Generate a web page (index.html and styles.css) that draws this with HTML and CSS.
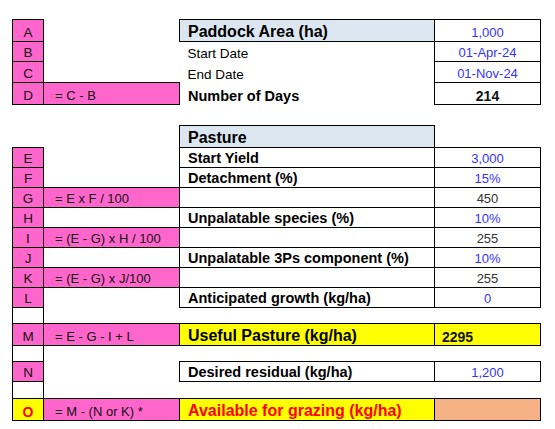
FILE: index.html
```html
<!DOCTYPE html>
<html>
<head>
<meta charset="utf-8">
<link rel="stylesheet" href="styles.css">
</head>
<body>
<table class="sheet">
  <colgroup>
    <col class="c-key">
    <col class="c-formula">
    <col class="c-label">
    <col class="c-value">
  </colgroup>
  <tr class="r22">
    <td class="key">A</td><td></td>
    <td class="label head">Paddock Area (ha)</td>
    <td class="val blue">1,000</td>
  </tr>
  <tr class="r20">
    <td class="key">B</td><td></td>
    <td class="label plain">Start Date</td>
    <td class="val blue">01-Apr-24</td>
  </tr>
  <tr class="r21">
    <td class="key">C</td><td></td>
    <td class="label plain">End Date</td>
    <td class="val blue">01-Nov-24</td>
  </tr>
  <tr class="r22">
    <td class="key">D</td><td class="formula">= C - B</td>
    <td class="label strong">Number of Days</td>
    <td class="val bold">214</td>
  </tr>
  <tr class="r21"><td></td><td></td><td></td><td></td></tr>
  <tr class="r22">
    <td></td><td></td>
    <td class="label head">Pasture</td>
    <td></td>
  </tr>
  <tr class="r20">
    <td class="key">E</td><td></td>
    <td class="label boxed">Start Yield</td>
    <td class="val blue">3,000</td>
  </tr>
  <tr class="r20">
    <td class="key">F</td><td></td>
    <td class="label boxed">Detachment (%)</td>
    <td class="val blue">15%</td>
  </tr>
  <tr class="r20">
    <td class="key">G</td><td class="formula">= E x F / 100</td>
    <td class="label boxed"></td>
    <td class="val dark">450</td>
  </tr>
  <tr class="r20">
    <td class="key">H</td><td></td>
    <td class="label boxed">Unpalatable species (%)</td>
    <td class="val blue">10%</td>
  </tr>
  <tr class="r20">
    <td class="key">I</td><td class="formula">= (E - G) x H / 100</td>
    <td class="label boxed"></td>
    <td class="val dark">255</td>
  </tr>
  <tr class="r20">
    <td class="key">J</td><td></td>
    <td class="label boxed">Unpalatable 3Ps component (%)</td>
    <td class="val blue">10%</td>
  </tr>
  <tr class="r20">
    <td class="key">K</td><td class="formula">= (E - G) x J/100</td>
    <td class="label boxed"></td>
    <td class="val dark">255</td>
  </tr>
  <tr class="r20">
    <td class="key">L</td><td></td>
    <td class="label boxed">Anticipated growth (kg/ha)</td>
    <td class="val blue">0</td>
  </tr>
  <tr class="r16"><td class="key empty"></td><td></td><td></td><td></td></tr>
  <tr class="r22">
    <td class="key">M</td><td class="formula">= E - G - I + L</td>
    <td class="label yellow">Useful Pasture (kg/ha)</td>
    <td class="val total">2295</td>
  </tr>
  <tr class="r16"><td class="key empty"></td><td></td><td></td><td></td></tr>
  <tr class="r20">
    <td class="key">N</td><td></td>
    <td class="label boxed">Desired residual (kg/ha)</td>
    <td class="val blue">1,200</td>
  </tr>
  <tr class="r17"><td class="key empty"></td><td></td><td></td><td></td></tr>
  <tr class="r22">
    <td class="key key-o">O</td><td class="formula">= M - (N or K) *</td>
    <td class="label yellow red">Available for grazing (kg/ha)</td>
    <td class="val salmon"></td>
  </tr>
</table>
</body>
</html>
```

FILE: styles.css
```css
html, body {
  margin: 0;
  background: #ffffff;
}
body {
  padding: 19px 0 0 12px;
  font-family: "Liberation Sans", Arial, sans-serif;
  color: #000;
}
.sheet {
  border-collapse: collapse;
  table-layout: fixed;
  width: 528px;
}
.c-key { width: 31px; }
.c-formula { width: 136px; }
.c-label { width: 255px; }
.c-value { width: 106px; }

.sheet td {
  padding: 0;
  vertical-align: bottom;
  white-space: nowrap;
  overflow: hidden;
  border: none;
}
.r22 { height: 22px; }
.r21 { height: 21px; }
.r20 { height: 20px; }
.r17 { height: 17px; }
.r16 { height: 16px; }

.sheet td.key {
  background: #ff66cc;
  border: 1px solid #000;
  text-align: center;
  font-size: 13.5px;
  line-height: 16px;
  color: #111;
}
.sheet td.key.empty { background: #fff; }
.sheet td.key.key-o {
  background: #ffff00;
  color: #ff0000;
  font-weight: bold;
  font-size: 14px;
}
.sheet td.formula {
  background: #ff66cc;
  border: 1px solid #000;
  font-size: 13px;
  line-height: 16px;
  padding-left: 11px;
  color: #111;
}
.sheet td.label {
  padding-left: 8px;
  font-weight: bold;
  font-size: 14.5px;
  line-height: 17px;
}
.sheet td.label.plain {
  font-weight: normal;
  font-size: 13.5px;
  line-height: 17px;
}
.sheet td.label.head {
  background: #dce6f1;
  border: 1px solid #000;
  font-size: 16px;
  line-height: 18px;
}
.sheet td.label.boxed {
  border: 1px solid #000;
}
.sheet td.label.yellow {
  background: #ffff00;
  border: 1px solid #000;
  font-size: 16px;
  line-height: 18px;
}
.sheet td.label.red { color: #ff0000; }

.sheet td.val {
  border: 1px solid #000;
  text-align: center;
  font-size: 13px;
  line-height: 16px;
}
.sheet td.val.blue { color: #3333ff; }
.sheet td.val.dark { color: #333; }
.sheet td.val.bold { font-weight: bold; font-size: 14px; color: #111; }
.sheet td.val.total {
  background: #ffff00;
  text-align: left;
  padding-left: 7px;
  font-weight: bold;
  font-size: 14px;
  color: #111;
}
.sheet td.val.salmon { background: #f4b183; }
```
